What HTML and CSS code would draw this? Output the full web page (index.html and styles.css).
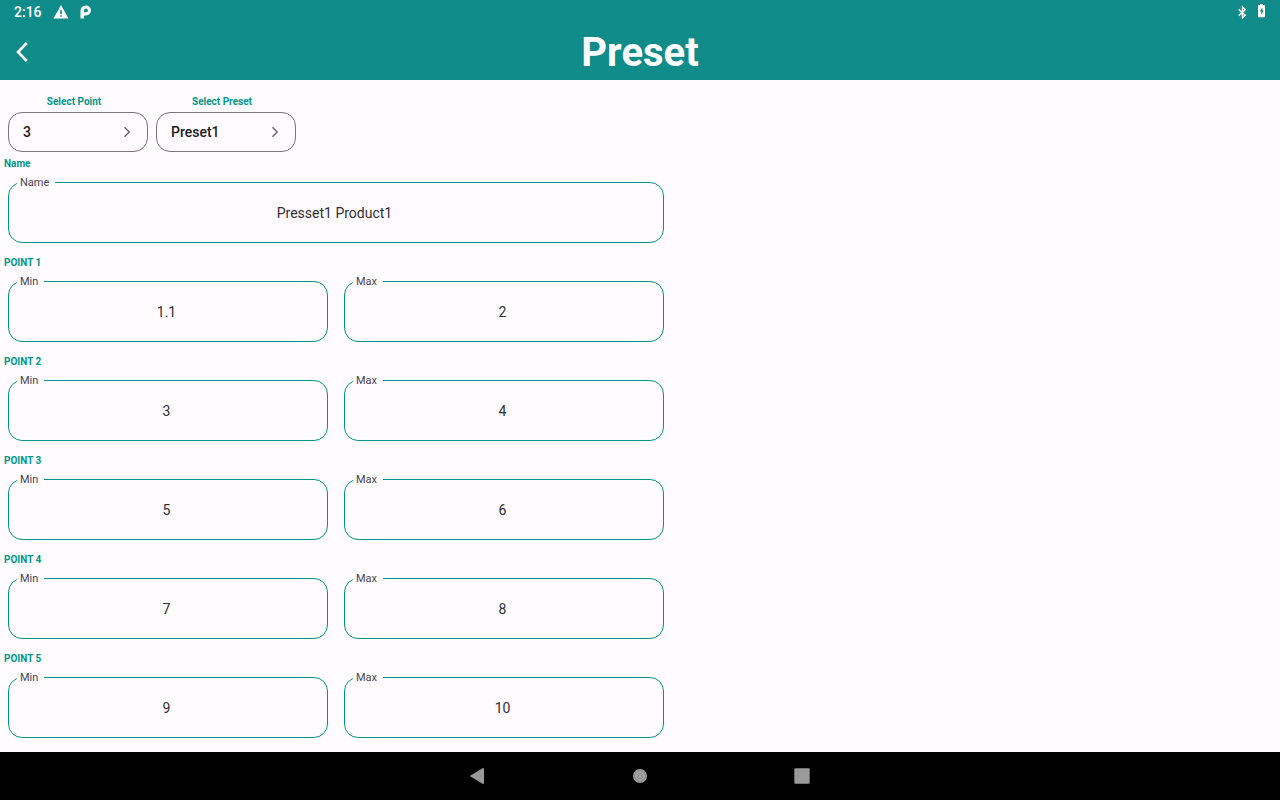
FILE: index.html
```html
<!DOCTYPE html>
<html lang="en">
<head>
<meta charset="utf-8">
<meta name="viewport" content="width=device-width, initial-scale=1">
<title>Preset</title>
<link rel="stylesheet" href="styles.css">
</head>
<body>
<header class="top">
  <div class="status">
    <div class="status-group">
      <span class="clock">2:16</span>
      <svg width="16" height="14" viewBox="0 0 16 14" aria-hidden="true"><path fill="currentColor" fill-rule="evenodd" d="M8 0 15.500 13.500H.5ZM7.200 5v4h1.600V5ZM7.200 10.200v1.600h1.600v-1.600Z"/></svg>
      <svg width="12" height="14" viewBox="0 0 12 14" aria-hidden="true"><path fill="currentColor" fill-rule="evenodd" d="M1 3.500Q2.500.5 6 .5A4.900 4.900 0 0 1 6 10.400H4V13.600H.5V6H4V7.300H6A1.900 1.900 0 1 0 4.100 5.400V6H.5Q.4 4.600 1 3.500Z"/></svg>
    </div>
    <div class="status-group">
      <svg width="10" height="14" viewBox="0 0 10 14" fill="none" stroke="currentColor" stroke-width="1.400" aria-hidden="true"><path d="M1.700 4.400 8.300 10.200 5.500 13V2L8.300 4.800 1.700 10.600"/></svg>
      <svg class="battery-icon" width="8" height="14" viewBox="0 0 8 14" aria-hidden="true"><path fill="currentColor" fill-rule="evenodd" d="M2 0h3v1.300H7V13.300H0V1.300h2ZM4.400 3.500 1.800 7.600h1.400v3.200l2.600-4.300H4.400Z"/></svg>
    </div>
  </div>
  <div class="app-bar">
    <button class="back" type="button" aria-label="Back"><svg width="12" height="20" viewBox="0 0 12 20" fill="none" stroke="currentColor" stroke-width="2.600" aria-hidden="true"><path d="M10.800 1 2 10l8.800 9"/></svg></button>
    <h1 class="title">Preset</h1>
  </div>
</header>

<main class="content">
  <form class="form">
    <div class="pickers">
      <div class="picker">
        <label class="caption" for="point">Select Point</label>
        <div class="select-box">
          <select id="point"><option>3</option></select>
          <svg class="chevron" width="8" height="12" viewBox="0 0 8 12" fill="none" stroke="currentColor" stroke-width="1.300" aria-hidden="true"><path d="m1.500 1.300 4.700 4.700-4.700 4.700"/></svg>
        </div>
      </div>
      <div class="picker">
        <label class="caption" for="preset">Select Preset</label>
        <div class="select-box">
          <select id="preset"><option>Preset1</option></select>
          <svg class="chevron" width="8" height="12" viewBox="0 0 8 12" fill="none" stroke="currentColor" stroke-width="1.300" aria-hidden="true"><path d="m1.500 1.300 4.700 4.700-4.700 4.700"/></svg>
        </div>
      </div>
    </div>

    <section class="group">
      <h2 class="caption">Name</h2>
      <div class="fields">
        <fieldset class="field"><legend><label for="name">Name</label></legend><input id="name" type="text" value="Presset1 Product1"></fieldset>
      </div>
    </section>
    <section class="group">
      <h2 class="caption">POINT 1</h2>
      <div class="fields">
        <fieldset class="field"><legend><label for="min1">Min</label></legend><input id="min1" type="text" value="1.1"></fieldset>
        <fieldset class="field"><legend><label for="max1">Max</label></legend><input id="max1" type="text" value="2"></fieldset>
      </div>
    </section>
    <section class="group">
      <h2 class="caption">POINT 2</h2>
      <div class="fields">
        <fieldset class="field"><legend><label for="min2">Min</label></legend><input id="min2" type="text" value="3"></fieldset>
        <fieldset class="field"><legend><label for="max2">Max</label></legend><input id="max2" type="text" value="4"></fieldset>
      </div>
    </section>
    <section class="group">
      <h2 class="caption">POINT 3</h2>
      <div class="fields">
        <fieldset class="field"><legend><label for="min3">Min</label></legend><input id="min3" type="text" value="5"></fieldset>
        <fieldset class="field"><legend><label for="max3">Max</label></legend><input id="max3" type="text" value="6"></fieldset>
      </div>
    </section>
    <section class="group">
      <h2 class="caption">POINT 4</h2>
      <div class="fields">
        <fieldset class="field"><legend><label for="min4">Min</label></legend><input id="min4" type="text" value="7"></fieldset>
        <fieldset class="field"><legend><label for="max4">Max</label></legend><input id="max4" type="text" value="8"></fieldset>
      </div>
    </section>
    <section class="group">
      <h2 class="caption">POINT 5</h2>
      <div class="fields">
        <fieldset class="field"><legend><label for="min5">Min</label></legend><input id="min5" type="text" value="9"></fieldset>
        <fieldset class="field"><legend><label for="max5">Max</label></legend><input id="max5" type="text" value="10"></fieldset>
      </div>
    </section>
  </form>
</main>

<nav class="system-nav" aria-label="System">
  <button type="button" aria-label="Back"><svg width="16" height="16" viewBox="0 0 16 16" aria-hidden="true"><path fill="currentColor" d="M13 0q1 0 1 1v14q0 1-1 1L.5 8.600Q-.2 8 .5 7.400Z"/></svg></button>
  <button type="button" aria-label="Home"><svg width="16" height="16" viewBox="0 0 16 16" aria-hidden="true"><circle cx="8" cy="8" r="7" fill="currentColor"/></svg></button>
  <button type="button" aria-label="Recent apps"><svg width="16" height="16" viewBox="0 0 16 16" aria-hidden="true"><rect x=".3" y=".3" width="15.400" height="15.400" rx="1" fill="currentColor"/></svg></button>
</nav>
</body>
</html>
```

FILE: styles.css
```css
:root {
  --bar: #0f8c8a;
  --accent: #009688;
  --surface: #fffbff;
  --ink: #1c1b1e;
}

* {
  box-sizing: border-box;
}

body {
  margin: 0;
  min-height: 100vh;
  display: flex;
  flex-direction: column;
  background: var(--surface);
  color: var(--ink);
  font-family: Roboto, "Liberation Sans", sans-serif;
}

button {
  display: flex;
  align-items: center;
  justify-content: center;
  padding: 0;
  border: 0;
  background: none;
  color: inherit;
}

.top {
  background: var(--bar);
  color: #fff;
}

.status {
  display: flex;
  justify-content: space-between;
  height: 24px;
  padding: 0 14px;
}

.status-group {
  display: flex;
  align-items: center;
  gap: 11px;
}

.clock {
  font-size: 14px;
  font-weight: 500;
}

.battery-icon {
  margin-bottom: 2px;
}

.app-bar {
  display: grid;
  grid-template-columns: 44px 1fr 44px;
  height: 56px;
}

.title {
  margin: 0;
  padding-top: 2px;
  font-size: 40px;
  font-weight: 700;
  line-height: 54px;
  text-align: center;
}

.content {
  flex: 1;
}

.form {
  max-width: 672px;
  padding-top: 15px;
}

.pickers {
  display: flex;
  gap: 8px;
  padding: 0 8px;
}

.picker {
  width: 140px;
  text-align: center;
}

.picker .caption {
  padding-right: 8px;
}

.caption {
  display: block;
  margin: 0;
  color: var(--accent);
  font-size: 10px;
  font-weight: 700;
  line-height: 14px;
}

.select-box {
  display: grid;
  align-items: center;
  height: 40px;
  margin-top: 3px;
  border: 1px solid #7f747c;
  border-radius: 14px;
}

.select-box > * {
  grid-area: 1 / 1;
}

.select-box select {
  width: 100%;
  height: 100%;
  padding: 0 32px 0 14px;
  border: 0;
  border-radius: 14px;
  appearance: none;
  background: none;
  color: inherit;
  font: 500 14px Roboto, "Liberation Sans", sans-serif;
}

.chevron {
  justify-self: end;
  margin-right: 16px;
  color: #605d62;
  pointer-events: none;
}

.group {
  padding: 5px 4px 0;
}

.group + .group {
  padding-top: 13px;
}

.fields {
  display: flex;
  gap: 16px;
  padding: 4px 4px 0;
}

.field {
  flex: 1;
  min-width: 0;
  margin: 0;
  padding: 0 8px;
  border: 1px solid var(--accent);
  border-radius: 14px;
}

.field legend {
  padding: 2px 6px 0 3px;
  color: #49454e;
  font-size: 11px;
  line-height: 12px;
}

.field label {
  display: block;
}

.field input {
  display: block;
  width: 100%;
  height: 53px;
  padding: 0 3px 6px 0;
  border: 0;
  background: none;
  color: #2f2e31;
  font: 400 14px Roboto, "Liberation Sans", sans-serif;
  text-align: center;
}

.system-nav {
  display: flex;
  justify-content: center;
  align-items: center;
  gap: 114px;
  height: 48px;
  background: #000;
  color: #999;
}

.system-nav button {
  width: 48px;
  height: 48px;
}
```
